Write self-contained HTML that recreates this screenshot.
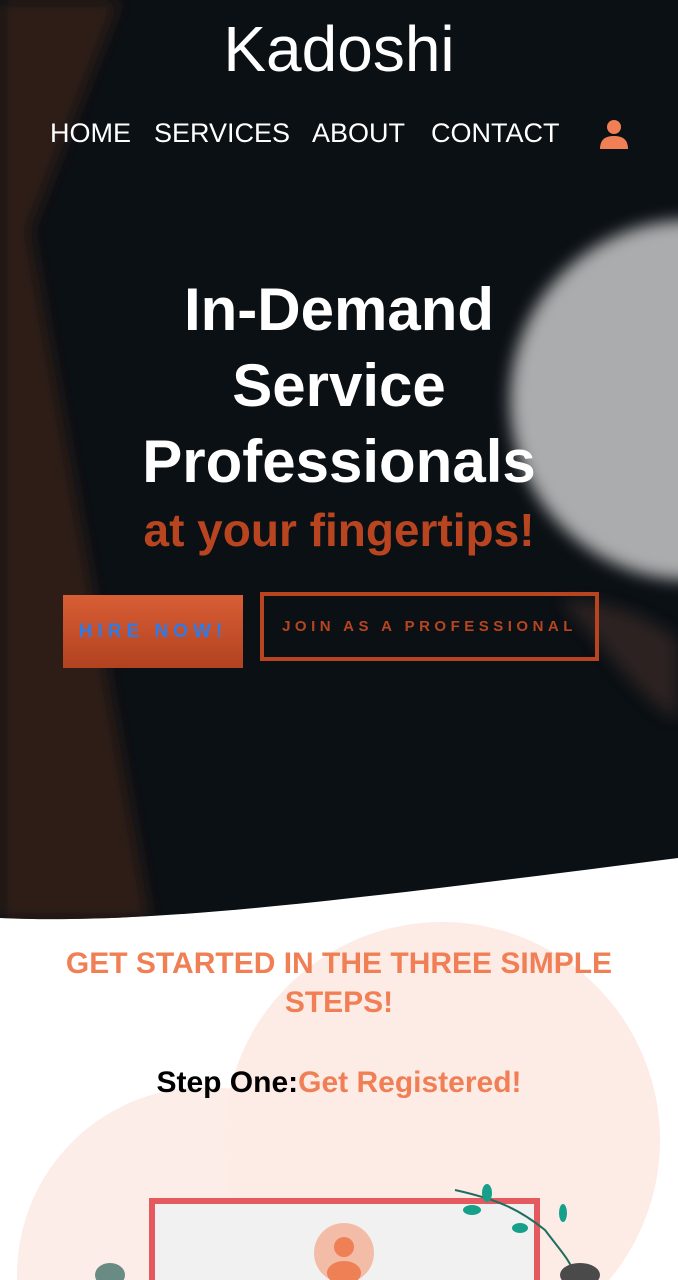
<!DOCTYPE html>
<html><head><meta charset="utf-8"><style>
*{margin:0;padding:0;box-sizing:border-box}
html,body{width:678px;height:1280px;overflow:hidden}
body{background:#fff;font-family:"Liberation Sans",sans-serif;position:relative}
.hero{position:absolute;left:0;top:0;width:678px;height:930px;overflow:hidden}
.abs{position:absolute}
.nav a{position:absolute;top:118px;color:#fff;font-size:27px;text-decoration:none;white-space:nowrap}
</style></head><body>
<svg class="abs" style="left:0;top:880px" width="678" height="400">
 <circle cx="442" cy="260" r="218" fill="#fdebe5"/>
 <circle cx="205" cy="395" r="188" fill="#fdebe5" opacity="0.9"/>
 <rect x="152" y="321" width="385" height="90" fill="#f1f1f1" stroke="#e45a5e" stroke-width="6"/>
 <circle cx="344" cy="373" r="30" fill="#f2bca7"/>
 <circle cx="344" cy="367" r="10" fill="#ef7f55"/>
 <ellipse cx="344" cy="393" rx="17" ry="12" fill="#ef7f55"/>
 <path d="M455,310 C500,320 520,330 545,350 C560,370 570,380 575,395" stroke="#1e6e60" stroke-width="2" fill="none"/>
 <ellipse cx="487" cy="313" rx="5" ry="9" fill="#16a08a"/><ellipse cx="472" cy="330" rx="9" ry="5" fill="#16a08a"/><ellipse cx="520" cy="348" rx="8" ry="5" fill="#16a08a"/><ellipse cx="563" cy="333" rx="4" ry="9" fill="#16a08a"/>
 <ellipse cx="580" cy="395" rx="20" ry="12" fill="#4a4a4a"/>
 <ellipse cx="110" cy="395" rx="15" ry="12" fill="#6a8a84"/>
</svg>
<div class="hero">
 <svg class="abs" style="left:0;top:0" width="678" height="930">
  <defs><filter id="b"><feGaussianBlur stdDeviation="8"/></filter>
  <clipPath id="c"><path d="M0,0 H678 V858 C350,900 150,925 0,918 Z"/></clipPath></defs>
  <g clip-path="url(#c)">
  <rect width="678" height="930" fill="#0b1015"/>
  <polygon points="0,0 120,0 30,230 150,920 0,920" fill="#2e1e18" filter="url(#b)"/>
  <circle cx="690" cy="400" r="180" fill="#c8c8c8" filter="url(#b)" opacity="0.85"/>
  <path d="M560,600 C600,640 640,700 678,720 L678,640 C640,610 600,600 560,600 Z" fill="#3a2c28" filter="url(#b)" opacity="0.7"/>
  </g>
 </svg>
 <div class="abs" style="left:0;top:12px;width:678px;text-align:center;color:#fff;font-size:64px">Kadoshi</div>
 <div class="nav"><a style="left:50px">HOME</a><a style="left:154px">SERVICES</a><a style="left:312px">ABOUT</a><a style="left:431px">CONTACT</a></div>
 <svg class="abs" style="left:598px;top:118px" width="32" height="32" viewBox="0 0 32 32"><circle cx="16" cy="9" r="7" fill="#f07f55"/><path d="M2,31 C2,21 8,18 16,18 C24,18 30,21 30,31 Z" fill="#f07f55"/></svg>
 <div class="abs" style="left:0;top:272px;width:678px;text-align:center;color:#fff;font-weight:bold;font-size:60px;line-height:76px">In-Demand<br>Service<br>Professionals</div>
 <div class="abs" style="left:0;top:503px;width:678px;text-align:center;color:#b8451f;font-weight:bold;font-size:46px">at your fingertips!</div>
 <div class="abs" style="left:63px;top:595px;width:180px;height:73px;background:linear-gradient(#d85e35,#b24220);color:#2d7be8;font-weight:bold;font-size:19px;letter-spacing:5px;text-align:center;line-height:73px">HIRE NOW!</div>
 <div class="abs" style="left:260px;top:592px;width:339px;height:69px;border:4px solid #b8451f;color:#b8451f;font-weight:bold;font-size:15px;letter-spacing:4.5px;line-height:61px;text-align:center;white-space:nowrap">JOIN AS A PROFESSIONAL</div>
</div>
<div class="abs" style="left:0;top:944px;width:678px;text-align:center;color:#f07f55;font-weight:bold;font-size:30px;line-height:39px">GET STARTED IN THE THREE SIMPLE<br>STEPS!</div>
<div class="abs" style="left:0;top:1066px;width:678px;text-align:center;font-size:30px;font-weight:bold;white-space:nowrap"><span style="color:#000">Step One:</span><span style="color:#f07f55">Get Registered!</span></div>
</body></html>
